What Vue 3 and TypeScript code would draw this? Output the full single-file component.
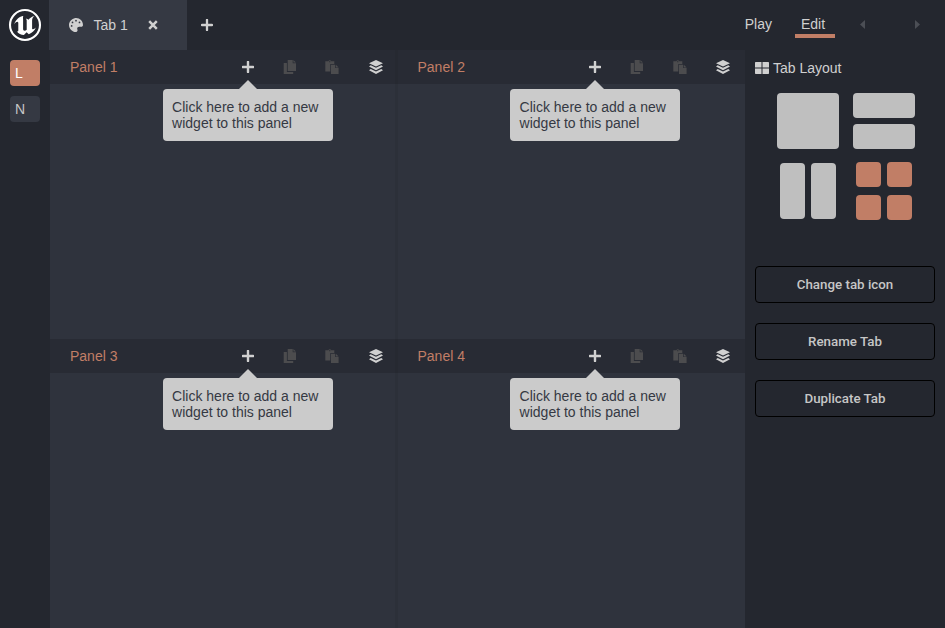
<script setup lang="ts">
interface Panel {
  id: number
  title: string
}

const panels: Panel[] = [1, 2, 3, 4].map((id) => ({ id, title: `Panel ${id}` }))
const actions: string[] = ['Change tab icon', 'Rename Tab', 'Duplicate Tab']
</script>

<template>
  <div class="app">
    <aside class="rail">
      <svg class="logo" viewBox="0 0 34 34">
        <circle cx="17" cy="17" r="15" fill="none" stroke="#fff" stroke-width="2.1" />
        <path
          fill="#fff"
          d="M15.5 7.8C11.3 8.7 7.8 11.7 6.2 16.2c1.4-1.7 2.7-2.6 3.5-2.3.6.2.6.9.6 1.5v7.1c0 1-.5 1.3-1.4 1 1.6 2.2 4.1 3.4 7 3.4l2.7-2.7 2.2 2.1c3.4-1.3 5.8-3.5 7.1-6.7-1.3 1.3-2.5 1.9-3.3 1.6-.5-.2-.5-.6-.5-1.3v-7.5c0-1.6.7-2.8 2.2-4.300-2.400.6-4.400 1.900-5.900 3.700-.7-.8-1.500-1-2.600-1 .7.500.9 1 .9 1.800v9.100c-.7.700-1.400 1.100-2.100 1.100-1 0-1.500-.6-1.500-1.700V11.500c0-1.500-.4-2.500.3-3.700z"
        />
      </svg>
      <button class="chip active">L</button>
      <button class="chip">N</button>
    </aside>

    <div class="main">
      <header class="topbar">
        <div class="tab">
          <svg class="palette" viewBox="0 0 512 512">
            <path
              fill="currentColor"
              d="M204.300 5C104.900 24.400 24.800 104.300 5.200 203.400c-37 187 131.700 326.400 258.800 306.700 41.200-6.400 61.400-54.600 42.500-91.700-23.100-45.400 9.900-98.400 60.900-98.400h79.700c35.800 0 64.800-29.600 64.900-65.300C511.500 97.100 368.100-26.900 204.300 5zM96 320a32 32 0 1 1 0-64 32 32 0 0 1 0 64zm32-128a32 32 0 1 1 0-64 32 32 0 0 1 0 64zm128-64a32 32 0 1 1 0-64 32 32 0 0 1 0 64zm128 64a32 32 0 1 1 0-64 32 32 0 0 1 0 64z"
            />
          </svg>
          <span>Tab 1</span>
          <svg class="close" viewBox="0 0 10 10">
            <path d="M1.200 1.200L8.800 8.800M8.800 1.200L1.200 8.800" stroke="currentColor" stroke-width="2.500" />
          </svg>
        </div>
        <svg class="plus add-tab" viewBox="0 0 12 12">
          <path d="M6 .9v10.200M.9 6h10.200" stroke="currentColor" stroke-width="2.300" stroke-linecap="round" />
        </svg>
        <nav class="modes">
          <span class="mode">Play</span>
          <span class="mode selected">Edit</span>
          <svg class="arrow back" viewBox="0 0 5 9"><path d="M5 0v9L0 4.500z" fill="currentColor" /></svg>
          <svg class="arrow forward" viewBox="0 0 5 9"><path d="M0 0v9l5-4.500z" fill="currentColor" /></svg>
        </nav>
      </header>

      <div class="workspace">
        <main class="panels">
          <section v-for="panel in panels" :key="panel.id" class="panel">
            <div class="panel-head">
              <span class="panel-title">{{ panel.title }}</span>
              <div class="tools">
                <div class="anchor">
                  <svg class="plus" viewBox="0 0 12 12">
                    <path d="M6 .9v10.200M.9 6h10.200" stroke="currentColor" stroke-width="2.400" stroke-linecap="round" />
                  </svg>
                  <div class="hint">Click here to add a new widget to this panel</div>
                </div>
                <svg class="tool muted" viewBox="0 0 14 14">
                  <path fill="currentColor" d="M4.700 0h5v3.300H13V11H4.700zM10.400 0L13 2.600h-2.600zM.7 3h3.200v9h6.300v2H.7z" />
                </svg>
                <svg class="tool muted" viewBox="0 0 14 14">
                  <path fill="currentColor" d="M.3 1.200h3a1.700 1.700 0 0 1 3 0h3v2.800H5.300v7.500h-5zM6 4.800h4.100v3.300h3.500V14H6zM10.800 4.800l2.800 2.700h-2.800z" />
                  <circle cx="4.800" cy="1.700" r=".6" fill="#282b34" />
                </svg>
                <svg class="tool" viewBox="0 0 14 14">
                  <path fill="currentColor" d="M7 0l7 3.300-7 3.300-7-3.300zM1.700 5.300L7 7.700l5.300-2.400L14 6.600 7 10.200 0 6.600zM1.700 9.100L7 11.500l5.300-2.400 1.700 1.200L7 14l-7-3.700z" />
                </svg>
              </div>
            </div>
          </section>
        </main>

        <aside class="settings">
          <h2 class="heading">
            <svg class="grid-icon" viewBox="0 0 14 12">
              <path fill="currentColor" d="M.7 0h5.800v5.500H0V.7Q0 0 .7 0zM7.500 0h5.800q.7 0 .7.7v4.800H7.500zM0 6.500h6.500V12H.7Q0 12 0 11.300zM7.500 6.500H14v4.800q0 .7-.7.700H7.500z" />
            </svg>
            Tab Layout
          </h2>
          <div class="layouts">
            <div class="layout single"><i></i></div>
            <div class="layout rows"><i></i><i></i></div>
            <div class="layout columns"><i></i><i></i></div>
            <div class="layout quad"><i></i><i></i><i></i><i></i></div>
          </div>
          <div class="actions">
            <button v-for="label in actions" :key="label" class="action">{{ label }}</button>
          </div>
        </aside>
      </div>
    </div>
  </div>
</template>

<style>
body {
  margin: 0;
  overflow: hidden;
}
</style>

<style scoped>
.app {
  display: flex;
  height: 100vh;
  background: #24272f;
  color: #d0d0d0;
  font: 14px/16px 'Liberation Sans', Arial, sans-serif;
}
svg {
  display: block;
  flex: none;
}
.rail {
  flex: none;
  width: 50px;
  box-sizing: border-box;
  padding-top: 8px;
  display: flex;
  flex-direction: column;
  align-items: center;
}
.logo {
  width: 34px;
  height: 34px;
  margin-bottom: 18px;
}
.chip {
  width: 30px;
  height: 26px;
  margin: 0 0 10px;
  padding: 0 0 0 5px;
  border: 0;
  border-radius: 4px;
  background: #353943;
  color: #c6c6c6;
  font: inherit;
  text-align: left;
}
.chip.active {
  background: #c17e66;
  color: #fff;
}
.main {
  flex: 1;
  min-width: 0;
  display: flex;
  flex-direction: column;
}
.topbar {
  display: flex;
  flex: none;
  height: 50px;
}
.tab {
  display: flex;
  align-items: center;
  width: 138px;
  margin-left: -1px;
  padding-left: 20px;
  box-sizing: border-box;
  background: #353943;
}
.palette {
  width: 14px;
  height: 14px;
  margin-right: 10.5px;
}
.close {
  width: 10px;
  height: 10px;
  margin-left: 20px;
}
.plus {
  width: 12px;
  height: 12px;
}
.add-tab {
  margin: 19px 0 0 14px;
}
.modes {
  display: flex;
  align-items: flex-start;
  margin-left: auto;
  padding: 16px 25px 0 0;
}
.mode {
  box-sizing: border-box;
  height: 22px;
}
.mode.selected {
  width: 40px;
  margin-left: 23px;
  padding-left: 6px;
  border-bottom: 4px solid #c17e66;
}
.arrow {
  width: 5px;
  height: 9px;
  margin-top: 4px;
  color: #4b4e55;
}
.back {
  margin-left: 25px;
}
.forward {
  margin-left: 50px;
}
.workspace {
  display: flex;
  flex: 1;
  min-height: 0;
}
.panels {
  flex: none;
  width: 695px;
  display: grid;
  grid-template-columns: 1fr 1fr;
  grid-template-rows: 289px 289px;
}
.panel {
  background: #2f333d;
}
.panel:nth-child(odd) {
  box-shadow: inset -3px 0 #2c3039;
}
.panel-head {
  display: flex;
  align-items: center;
  height: 34px;
  padding: 0 15px 0 20px;
  background: #282b34;
}
.panel:nth-child(odd) .panel-head {
  box-shadow: inset -3px 0 #262931;
}
.panel-title {
  color: #c17e66;
}
.tools {
  display: flex;
  align-items: center;
  margin-left: auto;
}
.tool {
  width: 14px;
  height: 14px;
  margin-left: 29px;
}
.tool.muted + .tool.muted {
  margin-left: 28.5px;
}
.tool.muted + .tool:not(.muted) {
  margin-left: 29.5px;
}
.muted {
  color: #4c4c4e;
}
.anchor {
  position: relative;
}
.hint {
  position: absolute;
  top: 28px;
  left: -79px;
  width: 170px;
  height: 52px;
  box-sizing: border-box;
  padding: 10px 9px 10px 9.600px;
  border-radius: 4px;
  background: #cbcbcb;
  color: #353943;
}
.hint::before {
  content: '';
  position: absolute;
  top: -9px;
  left: 76px;
  border: solid transparent;
  border-width: 0 9px 9px;
  border-bottom-color: #cbcbcb;
}
.settings {
  flex: 1;
  padding: 10px 10px 0;
}
.heading {
  display: flex;
  align-items: center;
  gap: 4px;
  margin: 0;
  font: inherit;
}
.grid-icon {
  width: 14px;
  height: 12px;
}
.layouts {
  display: grid;
  grid-template-columns: 62px 62px;
  grid-template-rows: 56px 58px;
  justify-content: center;
  gap: 13px 14px;
  margin-top: 17px;
  margin-left: 2px;
}
.layout {
  display: grid;
  gap: 6px;
}
.layout i {
  background: #bfbfbf;
  border-radius: 4px;
}
.columns {
  grid-template-columns: 25px 25px;
  justify-content: center;
  padding: 1px 0;
}
.quad {
  grid-template-columns: 25px 25px;
  grid-template-rows: 25px 25px;
  justify-content: center;
  gap: 8px 6px;
}
.quad i {
  background: #c17e66;
}
.actions {
  display: grid;
  gap: 20px;
  margin-top: 46px;
}
.action {
  height: 37px;
  padding: 0;
  border: 1px solid #000;
  border-radius: 4px;
  background: transparent;
  color: #c6c6c6;
  font: 500 13.333px/16px Roboto, sans-serif;
}
</style>
